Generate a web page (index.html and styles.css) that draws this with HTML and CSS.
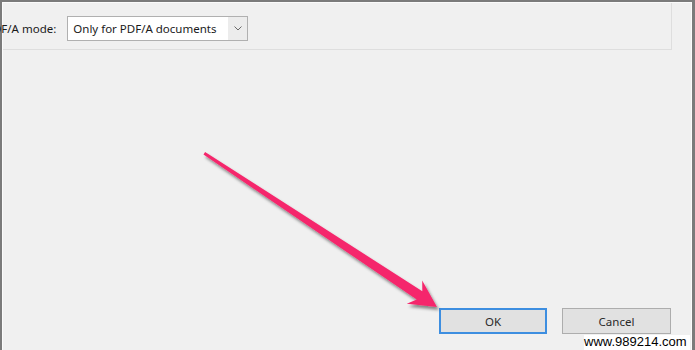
FILE: index.html
```html
<!DOCTYPE html>
<html>
<head>
<meta charset="utf-8">
<link rel="stylesheet" href="styles.css">
</head>
<body>
<div class="dialog">
  <div class="inner">
    <div class="groupbox">
      <div class="row">
        <span class="label">PDF/A mode:</span>
        <div class="select">
          <span class="select-text">Only for PDF/A documents</span>
          <span class="select-btn">
            <svg width="8" height="5" viewBox="0 0 8 5"><path d="M0.5 0.5 L4 4 L7.5 0.5" fill="none" stroke="#6a6a6a" stroke-width="1"/></svg>
          </span>
        </div>
      </div>
    </div>
    <div class="fill"></div>
    <div class="buttons">
      <button class="btn btn-default">OK</button>
      <button class="btn">Cancel</button>
    </div>
  </div>
</div>
<svg class="arrow" width="695" height="350" viewBox="0 0 695 350">
  <defs>
    <filter id="sh" x="-10%" y="-10%" width="130%" height="130%">
      <feDropShadow dx="2" dy="3" stdDeviation="1.8" flood-color="#000" flood-opacity="0.45"/>
    </filter>
  </defs>
  <polygon filter="url(#sh)" fill="#f5286c" points="437,307 422.2,280.4 422.3,291.2 205.1,152 203.5,154.5 416.7,299.6 406.8,303.8"/>
</svg>
<div class="watermark">www.989214.com</div>
</body>
</html>
```
FILE: styles.css
```css
html, body {
  margin: 0;
  padding: 0;
}
body {
  width: 695px;
  height: 350px;
  overflow: hidden;
  position: relative;
  background: #f0f0f0;
  font-family: "Noto Sans", "Open Sans", sans-serif;
  font-size: 11.5px;
  color: #1a1a1a;
}
.dialog {
  box-sizing: border-box;
  width: 695px;
  height: 350px;
  border-top: 2px solid #7b7b7b;
  border-left: 2px solid #7b7b7b;
  border-right: 3px solid #7b7b7b;
  background: #f0f0f0;
}
.inner {
  box-sizing: border-box;
  height: 100%;
  border-top: 1px solid #fbfbfb;
  border-left: 1px solid #fbfbfb;
  border-right: 1px solid #fbfbfb;
  display: flex;
  flex-direction: column;
}
.groupbox {
  box-sizing: border-box;
  height: 47px;
  margin-right: 19px;
  border-right: 1px solid #dedede;
  border-bottom: 1px solid #dedede;
}
.row {
  display: flex;
  align-items: center;
  padding-top: 13px;
}
.label {
  margin-left: -17px;
  white-space: nowrap;
  margin-right: 11px;
}
.select {
  box-sizing: border-box;
  width: 181px;
  height: 25px;
  border: 1px solid #b0b0b0;
  display: flex;
  background: #fff;
}
.select-text {
  flex: 1;
  padding-left: 5px;
  line-height: 23px;
  white-space: nowrap;
  overflow: hidden;
}
.select-btn {
  width: 19px;
  display: flex;
  align-items: center;
  justify-content: center;
  background: #ececec;
}
.fill {
  flex: 1;
}
.buttons {
  display: flex;
  justify-content: flex-end;
  gap: 15px;
  padding-right: 20px;
  margin-bottom: 16px;
}
.btn {
  box-sizing: border-box;
  width: 109px;
  height: 26px;
  border: 1px solid #adadad;
  background: #e1e1e1;
  font-family: "Noto Sans", "Open Sans", sans-serif;
  font-size: 11.5px;
  color: #2a2a2a;
  padding: 0;
}
.btn-default {
  width: 108px;
  border: 2px solid #3d8ee0;
}
.arrow {
  position: absolute;
  left: 0;
  top: 0;
}
.watermark {
  position: absolute;
  left: 584px;
  top: 335px;
  width: 106px;
  height: 15px;
  background: #ffffff;
  font-family: "Liberation Sans", Arial, sans-serif;
  font-size: 13px;
  line-height: 14px;
  color: #000;
  text-align: right;
  box-sizing: border-box;
  padding-right: 10px;
}
```
